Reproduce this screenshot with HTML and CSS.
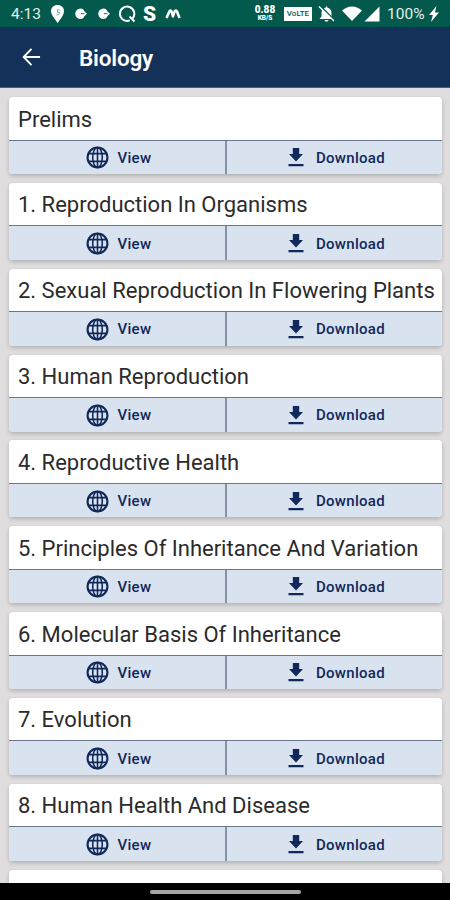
FILE: index.html
```html
<!DOCTYPE html>
<html lang="en">
<head>
<meta charset="utf-8">
<title>Biology</title>
<link rel="stylesheet" href="styles.css">
</head>
<body>
<svg class="defs" aria-hidden="true">
  <symbol id="globe" viewBox="0 0 22 22"><g fill="none" stroke="currentColor"><circle cx="11" cy="11" r="9.500" stroke-width="2"/><ellipse cx="11" cy="11" rx="4.600" ry="9.500" stroke-width="1.500"/><path d="M11 1v20M2.500 7.300h17M2.500 14.700h17" stroke-width="1.500"/></g></symbol>
  <symbol id="download" viewBox="0 0 16 19"><path fill="currentColor" d="M4.800 0h6.400v6H15L8 13.600 1 6h3.800zM.5 16h15v2.200H.5z"/></symbol>
  <symbol id="comet" viewBox="0 0 12 12"><path fill="currentColor" d="M5.500.5c2 0 3.400 1 4 3L12 5.700 9.500 8C8.900 10 7.500 11 5.500 11A5.250 5.250 0 1 1 5.500.5z"/><path d="M6 5.700h3.500" stroke="#03594b" stroke-width=".9"/></symbol>
</svg>
<div class="phone">
  <header class="status">
    <span class="clock">4:13</span>
    <svg class="pin" viewBox="0 0 13 18"><path fill="#fff" d="M6.500 0C10.500 0 13 2.600 13 6c0 4-3.500 8-6.300 12C4 14 0 10 0 6c0-3.400 2.700-6 6.500-6z"/><path d="M9 5H6.500v2.500h2.300c0 1.800-1.300 2.600-3.300 2.300" fill="none" stroke="#6da297" stroke-width=".9"/></svg>
    <svg class="comet"><use href="#comet"/></svg>
    <svg class="comet second"><use href="#comet"/></svg>
    <svg class="search" viewBox="0 0 18 18"><path d="M14.500 13.500A7.200 7.200 0 1 0 11.800 15.400M11.500 11.500l5 5" fill="none" stroke="#fff" stroke-width="2"/></svg>
    <span class="letter-s">S</span>
    <svg class="wave" viewBox="0 0 16 12"><path d="M1.500 10L4.500 3.200Q5.500 1.800 6.500 3.500L8 8.500 9.500 3.500Q10.800 1.500 12 3.500L14.500 10" fill="none" stroke="#fff" stroke-width="2.600" stroke-linejoin="round"/></svg>
    <span class="speed"><b>0.88</b><small>KB/S</small></span>
    <span class="volte">VoLTE</span>
    <svg class="bell" viewBox="0 0 17 16"><path fill="#fff" d="M8.500 0l1.200 1.700C12.500 2.500 13.500 4.500 13.500 7v3.500l2 2.500h-14l2-2.500V7c0-2.500 1-4.500 3.800-5.300zM6.500 14h4c-.5 2-3.500 2-4 0z"/><path d="M2.500 0l14 14" stroke="#03594b" stroke-width="1.500"/><path d="M1 .5l15 14.500" stroke="#fff" stroke-width="1.300"/></svg>
    <svg class="wifi" viewBox="0 0 20 15"><path fill="#fff" d="M0 4.500Q10-3.500 20 4.500L10 15z"/></svg>
    <svg class="signal" viewBox="0 0 16 16"><path fill="#fff" d="M15.500.5v15H.5z"/></svg>
    <span class="battery">100%</span>
    <svg class="bolt" viewBox="0 0 10 16"><path fill="#fff" d="M7.500 0L0 9h3.800L2 16l8-9.500H6z"/></svg>
  </header>
  <nav class="appbar">
    <svg class="back" viewBox="0 0 20 20"><path d="M19 10H2.500M10 1.500L1.800 10l8.200 8.500" fill="none" stroke="#fff" stroke-width="2"/></svg>
    <h1>Biology</h1>
  </nav>
  <main class="list" id="list"></main>
  <footer class="home"><i></i></footer>
</div>
<script src="script.js"></script>
</body>
</html>
```
FILE: styles.css
```css
* { box-sizing: border-box; }
body { margin: 0; font-family: Roboto, "Liberation Sans", sans-serif; }
.defs { position: absolute; width: 0; height: 0; }
.phone { width: 450px; height: 900px; display: flex; flex-direction: column; overflow: hidden; background: #dfdddd; }
.status { height: 27px; flex: none; display: flex; align-items: center; padding-left: 11px; background: #03594b; color: #fff; }
.status > * { flex: none; }
.clock { width: 40px; font-size: 15.500px; color: #e4eeeb; }
.pin { width: 13px; height: 18px; }
.comet { width: 12px; height: 12px; margin-left: 11px; }
.second { margin-left: 11px; }
.search { width: 18px; height: 18px; margin-left: 8px; }
.letter-s { width: 14px; margin: 2px 0 0 7px; font-size: 21px; font-weight: 900; line-height: 25px; }
.wave { width: 16px; height: 12px; margin-left: 8px; }
.speed { width: 22px; margin-left: 73px; text-align: center; }
.speed b, .speed small { display: block; }
.speed b { font-size: 10px; line-height: 10px; font-weight: 900; }
.speed small { font-size: 6.500px; line-height: 7px; font-weight: 900; }
.volte { width: 28px; height: 14px; margin-left: 8px; margin-top: 1px; background: #fff; color: #03594b; font-size: 8px; font-weight: 500; text-align: center; line-height: 14px; }
.bell { width: 17px; height: 16px; margin-left: 6px; }
.wifi { width: 20px; height: 15px; margin-left: 7px; }
.signal { width: 16px; height: 16px; margin-left: 2px; }
.battery { width: 38px; margin-left: 7px; font-size: 15.500px; color: #e4eeeb; }
.bolt { width: 10px; height: 16px; margin-left: 4px; }
.appbar { height: 61px; flex: none; display: flex; align-items: center; padding: 0 0 1px 22px; background: #143259; border-bottom: 1px solid #496078; }
.back { width: 19px; height: 20px; }
h1 { margin: 2px 0 0 38px; color: #fff; font-size: 22.500px; font-weight: 600; line-height: 30px; letter-spacing: -.2px; }
.list { flex: 1; min-height: 0; overflow: hidden; padding: 9px 8.500px 0 9px; display: flex; flex-direction: column; gap: 8.850px; }
.card { flex: none; height: 77px; border-radius: 4px; overflow: hidden; background: #fff; box-shadow: 0 2px 4px rgba(0,0,0,.2); }
.card h2 { margin: 0; height: 42.500px; padding: 1.500px 0 0 9px; font-size: 22px; font-weight: 400; line-height: 42px; white-space: nowrap; color: #2b2b2b; }
.actions { height: 34.500px; display: grid; grid-template-columns: 218px 1fr; border-top: 1.500px solid #687789; background: #d9e3f0; color: #10285a; }
.action { display: flex; align-items: center; padding-top: 1px; font-size: 15px; font-weight: 500; letter-spacing: .28px; }
.view { padding-left: 76.500px; gap: 9px; border-right: 2px solid #8492a5; }
.download { padding-left: 61px; gap: 12px; }
.globe { width: 23px; height: 23px; }
.arrow { width: 16px; height: 19px; }
.home { height: 17px; flex: none; display: flex; justify-content: center; padding-top: 7px; background: #000; }
.home i { width: 151px; height: 4px; border-radius: 2px; background: #a5a5a5; }
```
FILE: script.js
```js
const chapters = [
  "Prelims",
  "1. Reproduction In Organisms",
  "2. Sexual Reproduction In Flowering Plants",
  "3. Human Reproduction",
  "4. Reproductive Health",
  "5. Principles Of Inheritance And Variation",
  "6. Molecular Basis Of Inheritance",
  "7. Evolution",
  "8. Human Health And Disease"
];
document.getElementById("list").innerHTML = chapters.map(title => `
  <article class="card">
    <h2>${title}</h2>
    <div class="actions">
      <div class="action view"><svg class="globe"><use href="#globe"/></svg>View</div>
      <div class="action download"><svg class="arrow"><use href="#download"/></svg>Download</div>
    </div>
  </article>`).join("") + '<article class="card"></article>';
```
